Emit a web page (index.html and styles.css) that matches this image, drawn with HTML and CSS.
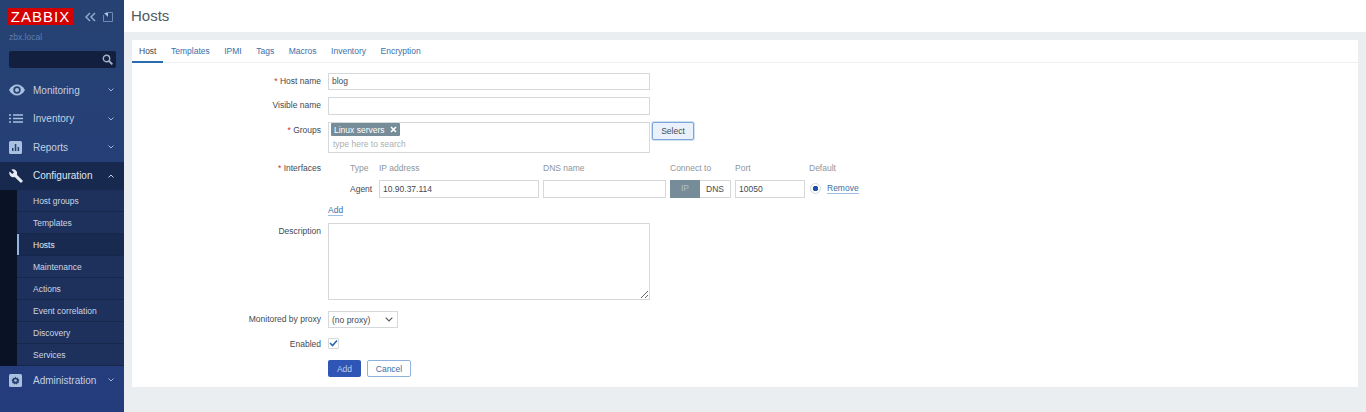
FILE: index.html
```html
<!DOCTYPE html>
<html lang="en">
<head>
    <meta charset="UTF-8">
    <title>Hosts</title>
    <link rel="stylesheet" href="styles.css">
</head>
<body>
    <aside class="sidebar">
        <div class="brand">
            <div class="logo">ZABBIX</div>
            <svg class="brand-icon" width="11" height="10" viewBox="0 0 11 10"><path d="M5 1 1 5l4 4M10 1 6 5l4 4" fill="none" stroke="#93a8cf" stroke-width="1.500"/></svg>
            <svg class="brand-icon" width="10" height="10" viewBox="0 0 10 10"><path d="M3 .5h6.500v9H.5V3" fill="none" stroke="#6f88b5"/><path d="M1 1l4 4V1z" fill="#b4c4de"/></svg>
        </div>
        <div class="server-name">zbx.local</div>
        <div class="search">
            <svg width="11" height="11" viewBox="0 0 11 11"><circle cx="4.500" cy="4.500" r="3.200" fill="none" stroke="#a5b3c9" stroke-width="1.400"/><path d="M7 7l3.300 3.300" stroke="#a5b3c9" stroke-width="1.800"/></svg>
        </div>
        <nav>
            <a class="menu-item">
                <svg class="menu-icon" width="16" height="12" viewBox="0 0 16 12"><path d="M0 6c2-3.600 4.800-5.500 8-5.500s6 1.900 8 5.500c-2 3.600-4.800 5.500-8 5.500S2 9.600 0 6z" fill="#a9c0e0"/><circle cx="8" cy="6" r="3.700" fill="#254273"/><circle cx="8" cy="6" r="2" fill="#a9c0e0"/></svg>
                <span>Monitoring</span>
                <svg class="chevron" width="6" height="4" viewBox="0 0 6 4"><path d="M.5.5 3 3 5.500.5" fill="none" stroke="#9fb4d6"/></svg>
            </a>
            <a class="menu-item">
                <svg class="menu-icon" width="14" height="9" viewBox="0 0 14 9"><path d="M0 1h2M4 1h10M0 4.500h2M4 4.500h10M0 8h2M4 8h10" stroke="#a9c0e0" stroke-width="1.300"/></svg>
                <span>Inventory</span>
                <svg class="chevron" width="6" height="4" viewBox="0 0 6 4"><path d="M.5.5 3 3 5.500.5" fill="none" stroke="#9fb4d6"/></svg>
            </a>
            <a class="menu-item">
                <svg class="menu-icon" width="13" height="13" viewBox="0 0 13 13"><rect width="13" height="13" rx="1.500" fill="#a9c0e0"/><path d="M3 7h1.500v3H3zM5.800 3h1.500v7H5.800zM8.600 6h1.500v4H8.600z" fill="#254273"/></svg>
                <span>Reports</span>
                <svg class="chevron" width="6" height="4" viewBox="0 0 6 4"><path d="M.5.5 3 3 5.500.5" fill="none" stroke="#9fb4d6"/></svg>
            </a>
            <a class="menu-item open">
                <svg class="menu-icon" width="14" height="14" viewBox="0 0 14 14"><path d="M13.600 11.500 7.900 5.800c.5-1.500.2-3.100-1-4.300C5.700.3 3.900 0 2.400.7l2.600 2.600-1.700 1.700L.6 2.400C-.1 3.900.2 5.700 1.400 6.900c1.200 1.200 2.800 1.500 4.300 1l5.700 5.700c.3.300.8.300 1.100 0l1.100-1c.3-.3.300-.8 0-1.100z" fill="#e4e9f2"/></svg>
                <span>Configuration</span>
                <svg class="chevron" width="6" height="4" viewBox="0 0 6 4"><path d="M.5 3.500 3 1l2.500 2.500" fill="none" stroke="#c5d2e6"/></svg>
            </a>
            <ul class="submenu">
                <li>Host groups</li>
                <li>Templates</li>
                <li class="selected">Hosts</li>
                <li>Maintenance</li>
                <li>Actions</li>
                <li>Event correlation</li>
                <li>Discovery</li>
                <li>Services</li>
            </ul>
            <a class="menu-item">
                <svg class="menu-icon" width="13" height="13" viewBox="0 0 13 13"><rect width="13" height="13" rx="1.500" fill="#a9c0e0"/><path d="M6.500 2.600 7.300 3.900l1.500-.2.500 1.400 1.200.9-.8 1.300.2 1.500-1.400.4-.9 1.200-1.100-.8-1.100.8-.9-1.200-1.400-.4.2-1.500-.8-1.300 1.200-.9.500-1.400 1.500.2z" fill="#254273"/><circle cx="6.500" cy="6.500" r="1.300" fill="#a9c0e0"/></svg>
                <span>Administration</span>
                <svg class="chevron" width="6" height="4" viewBox="0 0 6 4"><path d="M.5.5 3 3 5.500.5" fill="none" stroke="#9fb4d6"/></svg>
            </a>
        </nav>
    </aside>

    <div class="main">
        <header class="page-header">
            <h1>Hosts</h1>
        </header>
        <div class="card">
            <ul class="tabs">
                <li class="active">Host</li>
                <li>Templates</li>
                <li>IPMI</li>
                <li>Tags</li>
                <li>Macros</li>
                <li>Inventory</li>
                <li>Encryption</li>
            </ul>
            <form class="host-form">
                <label class="required">Host name</label>
                <div><input class="text wide" type="text" value="blog"></div>

                <label>Visible name</label>
                <div><input class="text wide" type="text"></div>

                <label class="required">Groups</label>
                <div class="groups-row">
                    <div class="multiselect">
                        <span class="tag">Linux servers
                            <svg width="7" height="7" viewBox="0 0 7 7"><path d="M1 1l5 5M6 1 1 6" stroke="#fff" stroke-width="1.600"/></svg>
                        </span>
                        <span class="search-hint">type here to search</span>
                    </div>
                    <button type="button" class="btn-select">Select</button>
                </div>

                <label class="required interfaces-label">Interfaces</label>
                <div class="interfaces">
                    <span class="col-head type-head">Type</span>
                    <span class="col-head">IP address</span>
                    <span class="col-head">DNS name</span>
                    <span class="col-head">Connect to</span>
                    <span class="col-head">Port</span>
                    <span class="col-head">Default</span>
                    <span class="agent">Agent</span>
                    <input class="text" type="text" value="10.90.37.114">
                    <input class="text" type="text">
                    <div class="toggle"><span class="on">IP</span><span>DNS</span></div>
                    <input class="text" type="text" value="10050">
                    <div class="default-cell"><span class="radio"></span><a class="link">Remove</a></div>
                </div>

                <span></span>
                <div class="add-row"><a class="link">Add</a></div>

                <label>Description</label>
                <div><textarea class="description"></textarea></div>

                <label class="after-description">Monitored by proxy</label>
                <div class="after-description">
                    <div class="proxy-select">(no proxy)
                        <svg width="8" height="5" viewBox="0 0 8 5"><path d="M.7.7 4 4 7.300.7" fill="none" stroke="#555" stroke-width="1.100"/></svg>
                    </div>
                </div>

                <label class="enabled-label">Enabled</label>
                <div>
                    <span class="checkbox">
                        <svg width="9" height="8" viewBox="0 0 9 8"><path d="M1 4l2.500 2.500L8 1.500" fill="none" stroke="#2a66a8" stroke-width="1.600"/></svg>
                    </span>
                </div>

                <span></span>
                <div class="actions">
                    <button type="button" class="btn-add">Add</button>
                    <button type="button" class="btn-cancel">Cancel</button>
                </div>
            </form>
        </div>
    </div>
</body>
</html>
```

FILE: styles.css
```css
* {
    box-sizing: border-box;
}

html, body {
    height: 100%;
}

body {
    margin: 0;
    display: flex;
    overflow: hidden;
    font-family: "Liberation Sans", Arial, sans-serif;
    font-size: 8.500px;
    color: #3f4a52;
    background-color: #ebeef0;
}

/* sidebar */
.sidebar {
    width: 124px;
    flex: none;
    padding-top: 8px;
    background: linear-gradient(180deg, #264272 0%, #243c7c 100%);
    color: #c7d2e4;
}

.brand {
    display: flex;
    align-items: center;
    padding-left: 8px;
}

.logo {
    width: 65px;
    height: 17px;
    background-color: #d40000;
    color: #fff;
    font-size: 15px;
    line-height: 17px;
    letter-spacing: 1px;
    text-align: center;
    margin-right: 12px;
}

.brand-icon {
    margin-right: 7px;
}

.server-name {
    margin: 6px 0 0 9px;
    height: 14px;
    line-height: 12px;
    color: #5f7eae;
}

.search {
    margin: 6px 8px 0 9px;
    height: 17px;
    border-radius: 2px;
    background-color: #131f3f;
    display: flex;
    align-items: center;
    justify-content: flex-end;
    padding-right: 3px;
}

nav {
    margin-top: 8px;
}

.menu-item {
    display: flex;
    align-items: center;
    height: 28.500px;
    padding: 0 10px 0 9px;
    font-size: 10px;
    color: #c3cfe2;
    position: relative;
}

.menu-item span {
    position: absolute;
    left: 33px;
}

.chevron {
    margin-left: auto;
}

.menu-item.open {
    background-color: #18294f;
    color: #dfe6f0;
}

.submenu {
    list-style: none;
    margin: 0;
    padding: 0 0 0 17px;
    background-color: #0a1226;
}

.submenu li {
    height: 22px;
    padding: 1px 0 0 16px;
    line-height: 21px;
    background-color: #1d315c;
    border-bottom: 1px solid #17274c;
    color: #ccd6e6;
}

.submenu li.selected {
    background-color: #182a4f;
    box-shadow: inset 2px 0 0 #8fb4e6;
    color: #e6ebf3;
}

/* main area */
.main {
    flex: 1;
    min-width: 0;
}

.page-header {
    height: 32px;
    background-color: #fff;
    padding-left: 7px;
}

h1 {
    margin: 0;
    font-size: 15px;
    font-weight: normal;
    line-height: 32px;
    color: #4f5b63;
}

.card {
    margin: 8px 8px 0 8px;
    height: 347px;
    background-color: #fff;
}

.tabs {
    display: flex;
    list-style: none;
    height: 23px;
    margin: 0;
    padding: 0;
    border-bottom: 1px solid #eef0f2;
    color: #3a6fa8;
}

.tabs li {
    padding: 0 7px;
    margin-right: 0.500px;
    line-height: 22px;
}

.tabs li.active {
    height: 23px;
    color: #3f4a52;
    border-bottom: 2px solid #2a6cb0;
}

.host-form {
    display: grid;
    grid-template-columns: 189px 1fr;
    column-gap: 7px;
    row-gap: 7px;
    padding-top: 9.500px;
}

.host-form label {
    text-align: right;
    line-height: 17.500px;
}

.required::before {
    content: "* ";
    color: #d32f2f;
}

.text {
    display: block;
    height: 17.500px;
    width: 100%;
    padding: 0 3px;
    border: 1px solid #d5d9dc;
    font: 8.500px "Liberation Sans", Arial, sans-serif;
    color: #3f4a52;
    background-color: #fff;
}

.wide {
    width: 322px;
}

.groups-row {
    display: flex;
    align-items: flex-start;
}

.multiselect {
    width: 322px;
    height: 31.500px;
    border: 1px solid #d5d9dc;
    padding: 0.500px 2px;
}

.tag {
    display: flex;
    align-items: center;
    gap: 5px;
    width: max-content;
    height: 13px;
    padding: 0 3px;
    border-radius: 1px;
    background-color: #768d99;
    color: #fff;
}

.search-hint {
    display: block;
    margin-top: 1.500px;
    padding-left: 2px;
    line-height: 12px;
    color: #a9b0b5;
}

.btn-select {
    width: 42px;
    height: 18px;
    margin-left: 2px;
    padding: 0;
    border: 1px solid #7fa6d8;
    border-radius: 2px;
    background-color: #eaf1fa;
    box-shadow: 0 0 0 1px #cfdff3;
    font: 8.500px "Liberation Sans", Arial, sans-serif;
    color: #3f4a52;
}

.host-form .interfaces-label {
    line-height: 16px;
}

.interfaces {
    display: grid;
    grid-template-columns: 47px 160px 123px 61px 70px auto;
    grid-template-rows: 20px 17.500px;
    column-gap: 4px;
    justify-content: start;
    align-items: center;
}

.col-head {
    color: #8d969c;
    line-height: 16px;
    align-self: start;
}

.type-head,
.agent {
    padding-left: 22px;
}

.agent {
    color: #3f4a52;
    white-space: nowrap;
}

.toggle {
    display: flex;
    height: 17.500px;
    line-height: 17px;
    text-align: center;
}

.toggle span {
    flex: 1;
    border: 1px solid #d5d9dc;
    border-left: 0;
}

.toggle .on {
    border: 0;
    background-color: #768d99;
    color: #b4c0c8;
}

.default-cell {
    display: flex;
    align-items: center;
    gap: 6px;
    padding-left: 1px;
}

.radio {
    width: 11px;
    height: 11px;
    border-radius: 50%;
    border: 1px solid #d5d9dc;
    background: radial-gradient(circle, #1f4fa8 0, #1f4fa8 2.500px, #fff 3px);
}

.link {
    color: #3a6fa8;
    border-bottom: 1px solid #9fc0e4;
    line-height: 10px;
}

.add-row {
    height: 11.500px;
    display: flex;
    align-items: flex-start;
}

.description {
    display: block;
    width: 322px;
    height: 77px;
    border: 1px solid #d5d9dc;
    margin: 0;
}

.after-description {
    margin-top: 4px;
}

.proxy-select {
    display: flex;
    align-items: center;
    justify-content: space-between;
    width: 70px;
    height: 17px;
    padding: 0 4px 0 3px;
    border: 1px solid #d5d9dc;
}

.host-form .enabled-label {
    line-height: 16px;
}

.checkbox {
    display: flex;
    align-items: center;
    justify-content: center;
    width: 11px;
    height: 11px;
    margin-top: 2px;
    border: 1px solid #d5d9dc;
    border-radius: 1px;
}

.actions {
    display: flex;
    gap: 6px;
    margin-top: 1.500px;
}

.actions button {
    height: 17px;
    padding: 0;
    border-radius: 2px;
    font: 8.500px "Liberation Sans", Arial, sans-serif;
}

.btn-add {
    width: 33px;
    border: 0;
    background-color: #2f55b5;
    color: #b9cff0;
}

.btn-cancel {
    width: 44px;
    border: 1px solid #8db2dc;
    background-color: #fff;
    color: #3a6fa8;
}
```
